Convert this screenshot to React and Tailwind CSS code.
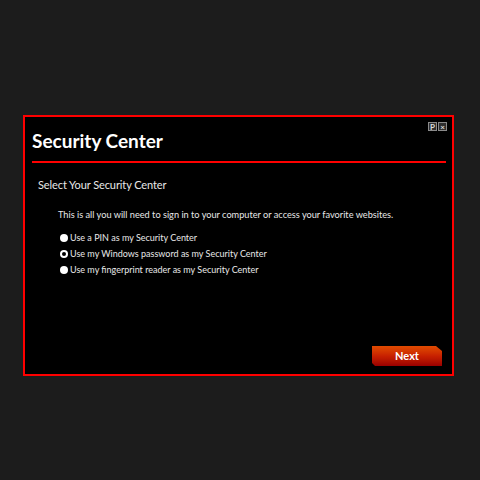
const OPTIONS = [
  { label: 'Use a PIN as my Security Center', checked: false },
  { label: 'Use my Windows password as my Security Center', checked: true },
  { label: 'Use my fingerprint reader as my Security Center', checked: false },
]

const Radio = ({ checked }) => (
  <span className="flex h-[8px] w-[8px] items-center justify-center rounded-full bg-white">
    {checked && <span className="h-[4px] w-[4px] rounded-full bg-black" />}
  </span>
)

const TitleButton = ({ children }) => (
  <span className="flex h-[9px] w-[9px] items-center justify-center border border-[#8a8a8a] bg-[#2e2e2e] text-[8px] leading-none font-bold text-[#dcdcdc]">
    {children}
  </span>
)

export default function App() {
  return (
    <div className="h-[480px] w-[480px] bg-[#1c1c1c] pt-[115px] pl-[23px] font-['Lato',sans-serif]">
      <div className="relative flex h-[261px] w-[431px] flex-col border-2 border-[#ff0000] bg-black pl-[7px] pr-[7px]">
        <div className="absolute right-[5px] top-[5px] flex gap-[1px]">
          <TitleButton>P</TitleButton>
          <TitleButton>×</TitleButton>
        </div>
        <h1 className="mt-[11px] text-[19px] leading-[26px] font-bold text-white">Security Center</h1>
        <div className="mt-[7px] h-[2px] w-[414px] bg-[#ff0000]" />
        <p className="mt-[14px] pl-[6px] text-[11px] leading-[16px] tracking-[-0.1px] text-[#e8e8e8]">Select Your Security Center</p>
        <p className="mt-[15px] pl-[26px] text-[9.2px] leading-[14px] text-[#e8e8e8]">
          This is all you will need to sign in to your computer or access your favorite websites.
        </p>
        <div className="mt-[9px] flex flex-col gap-[2px] pl-[28px]">
          {OPTIONS.map((o) => (
            <div key={o.label} className="flex h-[14px] items-center gap-[2px] text-[9px] text-[#e8e8e8]">
              <Radio checked={o.checked} />
              <span>{o.label}</span>
            </div>
          ))}
        </div>
        <div className="mt-auto mb-[8px] flex justify-end pr-[3px]">
          <button
            className="flex h-[20px] w-[70px] items-center justify-center bg-gradient-to-b from-[#e04a00] via-[#c82000] to-[#9a0000] text-[11px] font-bold text-white [clip-path:polygon(0_0,64px_0,70px_5px,70px_20px,3px_20px,0_17px)]"
          >
            Next
          </button>
        </div>
      </div>
    </div>
  )
}
